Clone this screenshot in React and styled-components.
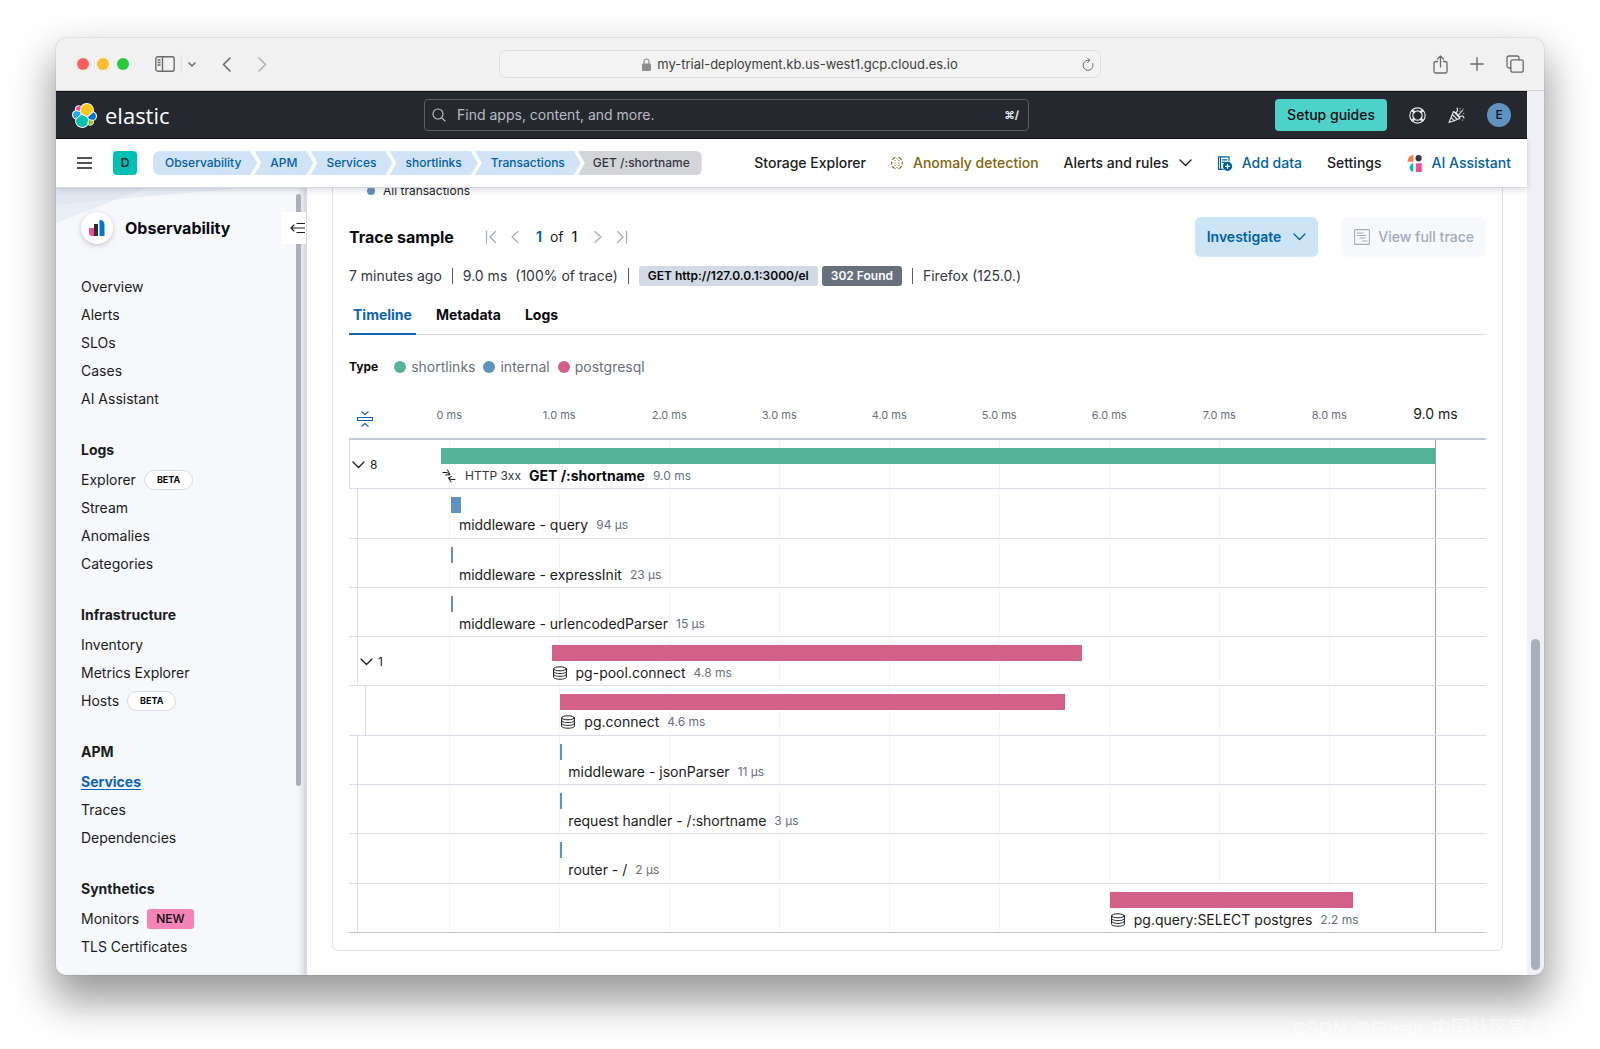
import React, { useState } from 'react';
import styled, { createGlobalStyle, css } from 'styled-components';

const color = {
  ink: '#1a1c21',
  title: '#0b0c10',
  subdued: '#69707d',
  disabled: '#a2abba',
  link: '#0061a6',
  active: '#0b64b8',
  border: '#d8deea',
  green: '#54b399',
  blue: '#6092c0',
  pink: '#d36086',
};

const GlobalStyle = createGlobalStyle`
  *, *::before, *::after { box-sizing: border-box; }
  body {
    margin: 0;
    background: #fff;
    color: ${color.ink};
    font-family: Inter, "Noto Sans", sans-serif;
    font-size: 14px;
    line-height: 20px;
  }
  button, input { font: inherit; color: inherit; }
  button { border: 0; padding: 0; background: none; cursor: pointer; }
  a { color: inherit; text-decoration: none; }
  h1, h2, h3, ul, ol { margin: 0; padding: 0; font: inherit; list-style: none; }
  svg { display: block; flex: none; }
`;

const Desktop = styled.div`
  position: relative;
  height: 100vh;
  min-height: 700px;
  padding: 38px 56px 74px;
  overflow: hidden;
`;

const BrowserWindow = styled.div`
  height: 100%;
  display: flex;
  flex-direction: column;
  border-radius: 10px;
  overflow: hidden;
  background: #fff;
  box-shadow: 0 0 1px rgba(0, 0, 0, 0.5), 0 22px 40px 4px rgba(0, 0, 0, 0.4);
`;

const Watermark = styled.div`
  position: absolute;
  right: 16px;
  bottom: 8px;
  font: 19px/24px "Liberation Sans", "Noto Sans CJK SC", sans-serif;
  color: rgba(255, 255, 255, 0.6);
`;

/* ---------- browser toolbar ---------- */

const TitleBar = styled.div`
  flex: none;
  height: 53px;
  display: grid;
  grid-template-columns: 1fr 602px 1fr;
  align-items: center;
  background: #f1f1f1;
  border-bottom: 1px solid #cfcfcf;
  color: #6b6b6b;
`;

const TitleGroup = styled.div`
  display: flex;
  align-items: center;
  justify-content: ${(p) => (p.$end ? 'flex-end' : 'flex-start')};
  gap: ${(p) => p.$gap}px;
  padding: ${(p) => p.$pad || 0};
`;

const Light = styled.span`
  width: 12px;
  height: 12px;
  border-radius: 50%;
  background: ${(p) => p.$color};
`;

const Divider = styled.span`
  width: 1px;
  height: 18px;
  background: #e2e2e2;
`;

const AddressBar = styled.div`
  display: grid;
  grid-template-columns: 1fr auto 1fr;
  align-items: center;
  height: 28px;
  padding: 0 6px;
  border: 1px solid #dcdcdc;
  border-radius: 7px;
  background: #f3f3f3;
`;

const Address = styled.label`
  grid-column: 2;
  display: flex;
  align-items: center;
  gap: 6px;
  input {
    field-sizing: content;
    border: 0;
    padding: 0;
    background: none;
    outline: none;
    font-size: 13px;
    color: #3f3f3f;
  }
`;

const Reload = styled.button`
  justify-self: end;
`;

/* ---------- page frame ---------- */

const Viewport = styled.div`
  flex: 1;
  min-height: 0;
  display: flex;
`;

const Page = styled.div`
  flex: 1;
  min-width: 0;
  display: flex;
  flex-direction: column;
`;

const ScrollTrack = styled.div`
  flex: none;
  width: 17px;
  display: flex;
  align-items: flex-end;
  justify-content: center;
  padding-bottom: 5px;
  background: #eff0f5;
`;

const PageThumb = styled.div`
  width: 9px;
  height: 37%;
  min-height: 331px;
  border-radius: 5px;
  background: #a9afba;
`;

const TopHeader = styled.header`
  flex: none;
  height: 48px;
  display: flex;
  align-items: center;
  padding: 0 16px;
  background: #25282f;
  border: solid #101114;
  border-width: 1px 0;
`;

const Brand = styled.a`
  display: flex;
  align-items: center;
  gap: 8px;
  width: 106px;
  color: #fff;
  font: 22px/30px "Open Sans", "Noto Sans", sans-serif;
`;

const SearchArea = styled.div`
  flex: 1;
  display: flex;
  justify-content: center;
`;

const SearchBox = styled.label`
  display: flex;
  align-items: center;
  gap: 11px;
  width: 605px;
  height: 32px;
  padding: 0 9px 0 7px;
  border: 1px solid #5b5e65;
  border-radius: 4px;
  color: #c4c6cb;
  input {
    flex: 1;
    min-width: 0;
    border: 0;
    padding: 0;
    background: none;
    outline: none;
  }
  input::placeholder { color: #b9bbc0; opacity: 1; }
  kbd {
    font: 700 11px/16px Inter, "DejaVu Sans", sans-serif;
    color: #e8e9eb;
  }
`;

const HeaderActions = styled.div`
  display: flex;
  align-items: center;
  gap: 22px;
  color: #e6e7ea;
`;

const SetupButton = styled.button`
  height: 32px;
  padding: 0 12px;
  border-radius: 4px;
  background: #4dd2ca;
  color: #0b0c10;
  font-weight: 500;
`;

const Avatar = styled.button`
  width: 24px;
  height: 24px;
  border-radius: ${(p) => (p.$round ? '50%' : '4px')};
  background: ${(p) => p.$color};
  color: #07101f;
  font-size: 12px;
  line-height: 24px;
  font-weight: 500;
`;

const SubHeader = styled.div`
  position: relative;
  z-index: 1;
  flex: none;
  height: 49px;
  display: flex;
  align-items: center;
  gap: 16px;
  padding: 0 16px 0 20px;
  background: #fff;
  border-bottom: 1px solid #d3dae6;
  box-shadow: 0 2px 6px rgba(60, 60, 70, 0.18);
`;

const MenuButton = styled.button`
  margin-right: 4px;
`;

const Breadcrumbs = styled.ol`
  display: flex;
  li + li { margin-left: -3px; }
`;

const chevronTail = 'calc(100% - 7px) 0, 100% 50%, calc(100% - 7px) 100%';

const Crumb = styled.a`
  display: block;
  height: 24px;
  padding: 0 16px;
  font-size: 12px;
  line-height: 24px;
  font-weight: 500;
  white-space: nowrap;
  background: #d1e3f6;
  color: ${color.link};
  clip-path: polygon(0 0, ${chevronTail}, 0 100%, 7px 50%);
  ${(p) => p.$first && css`
    padding-left: 12px;
    border-radius: 7px 0 0 7px;
    clip-path: polygon(0 0, ${chevronTail}, 0 100%);
  `}
  ${(p) => p.$last && css`
    padding: 0 12px 0 15px;
    border-radius: 0 6px 6px 0;
    background: #d4d5d8;
    color: #343741;
    clip-path: polygon(0 0, 100% 0, 100% 100%, 0 100%, 7px 50%);
  `}
`;

const ToolLinks = styled.nav`
  margin-left: auto;
  display: flex;
  align-items: center;
  gap: 25px;
  white-space: nowrap;
`;

const ToolLink = styled.a`
  display: flex;
  align-items: center;
  gap: 10px;
  font-weight: 500;
  color: ${(p) => p.$color || color.ink};
`;

/* ---------- sidebar ---------- */

const Body = styled.div`
  flex: 1;
  min-height: 0;
  display: flex;
`;

const Sidebar = styled.aside`
  position: relative;
  flex: none;
  width: 251px;
  overflow: hidden;
  padding: 24px 0 0 25px;
  background: #f7f8fc;
  border-right: 1px solid #d3dae6;
  box-shadow: inset -6px 0 6px -3px rgba(110, 115, 130, 0.3);
`;

const SidebarArt = styled.svg`
  position: absolute;
  top: 0;
  left: 0;
`;

const SidebarThumb = styled.div`
  position: absolute;
  top: 6px;
  right: 5px;
  width: 5px;
  height: 592px;
  border-radius: 3px;
  background: #abb0ba;
`;

const SidebarTop = styled.div`
  position: relative;
  display: flex;
  align-items: center;
  gap: 12px;
  margin-bottom: 29px;
`;

const SolutionMark = styled.span`
  width: 32px;
  height: 32px;
  display: grid;
  place-items: center;
  border-radius: 50%;
  background: #fff;
  box-shadow: 0 1px 4px rgba(0, 0, 0, 0.16), 0 4px 8px rgba(0, 0, 0, 0.06);
`;

const SolutionTitle = styled.h2`
  font-size: 16px;
  line-height: 24px;
  font-weight: 700;
  color: ${color.title};
`;

const CollapseButton = styled.button`
  margin-left: auto;
  width: 25px;
  height: 32px;
  padding-left: 9px;
  border-radius: 4px 0 0 4px;
  background: #fff;
`;

const NavGroup = styled.section`
  & + & { margin-top: 23px; }
  h3 {
    height: 28px;
    margin-bottom: 2px;
    line-height: 28px;
    font-weight: 700;
  }
  li {
    display: flex;
    align-items: center;
    gap: 8px;
    height: 28px;
  }
`;

const NavLink = styled.a`
  ${(p) => p.$active && css`
    font-weight: 700;
    color: ${color.active};
    text-decoration: underline;
    text-underline-offset: 2px;
  `}
`;

const BetaBadge = styled.span`
  height: 20px;
  padding: 0 12px;
  border: 1px solid #d3dae6;
  border-radius: 10px;
  background: #fff;
  color: #07080a;
  font-size: 9px;
  line-height: 18px;
  font-weight: 700;
`;

const NewBadge = styled.span`
  height: 20px;
  padding: 0 9px;
  border-radius: 3px;
  background: #f583b7;
  color: #07080a;
  font-size: 12px;
  line-height: 20px;
  font-weight: 500;
`;

/* ---------- main panel ---------- */

const Main = styled.main`
  flex: 1;
  min-width: 0;
  display: flex;
  flex-direction: column;
  justify-content: flex-end;
  overflow: hidden;
  padding: 0 24px 24px 25px;
`;

const Panel = styled.section`
  padding: 30px 16px 17px;
  border: 1px solid ${color.border};
  border-radius: 6px;
`;

const SeriesKey = styled.div`
  display: flex;
  align-items: center;
  gap: 8px;
  margin-bottom: 18px;
  padding-left: 18px;
  font-size: 12px;
  line-height: 16px;
`;

const Dot = styled.span`
  flex: none;
  width: ${(p) => p.$size}px;
  height: ${(p) => p.$size}px;
  border-radius: 50%;
  background: ${(p) => p.$color};
`;

const TraceHeader = styled.div`
  display: flex;
  align-items: center;
  height: 40px;
  margin-bottom: 9px;
  h2 {
    margin-right: 29px;
    font-size: 16px;
    line-height: 24px;
    font-weight: 700;
    color: ${color.title};
  }
`;

const Pager = styled.div`
  display: flex;
  align-items: center;
  gap: 8px;
  color: ${color.disabled};
  button { width: 16px; height: 16px; }
`;

const PageCount = styled.div`
  display: flex;
  gap: 8px;
  margin: 0 5px;
  color: ${color.ink};
  b { font-weight: 500; }
  b:first-child { font-weight: 700; color: ${color.active}; }
`;

const TraceActions = styled.div`
  margin-left: auto;
  display: flex;
  gap: 24px;
`;

const ActionButton = styled.button`
  display: flex;
  align-items: center;
  gap: ${(p) => (p.$muted ? 8 : 12)}px;
  height: 40px;
  padding: 0 12px;
  border-radius: 6px;
  font-weight: ${(p) => (p.$muted ? 500 : 600)};
  background: ${(p) => (p.$muted ? '#f8f9fc' : '#cce4f5')};
  color: ${(p) => (p.$muted ? color.disabled : color.link)};
`;

const Summary = styled.div`
  display: flex;
  align-items: center;
  gap: 10px;
  height: 20px;
  margin-bottom: 9px;
  white-space: nowrap;
`;

const SummaryText = styled.span`
  display: flex;
  gap: 8px;
  color: #343741;
`;

const Pipe = styled.span`
  width: 1px;
  height: 16px;
  background: #5a5e68;
`;

const Badges = styled.span`
  display: flex;
  gap: 4px;
`;

const Badge = styled.span`
  height: 20px;
  padding: 0 9px;
  border-radius: 3px;
  background: ${(p) => p.$bg};
  color: ${(p) => p.$fg};
  font-size: 12px;
  line-height: 20px;
  font-weight: 600;
`;

const Tabs = styled.div`
  display: flex;
  gap: 16px;
  height: 40px;
  margin-bottom: 22px;
  box-shadow: inset 0 -1px 0 #d3dae6;
`;

const Tab = styled.button`
  padding: 0 4px;
  font-weight: 700;
  color: ${(p) => (p.$active ? color.active : color.title)};
  box-shadow: ${(p) => (p.$active ? `inset 0 -2px 0 ${color.active}` : 'none')};
`;

const Legend = styled.div`
  display: flex;
  align-items: center;
  gap: 8px;
  color: ${color.subdued};
  b {
    margin-right: 8px;
    font-size: 12px;
    font-weight: 700;
    color: ${color.title};
  }
`;

const LegendItem = styled.span`
  display: flex;
  align-items: center;
  gap: 5px;
`;

/* ---------- waterfall ---------- */

const Axis = styled.div`
  display: grid;
  grid-template-columns: 92px 1fr;
  height: 40px;
  margin-top: 21px;
`;

const FoldButton = styled.button`
  align-self: end;
  margin: 0 0 11px 8px;
  width: 16px;
  height: 16px;
`;

const Scale = styled.div`
  position: relative;
`;

const Tick = styled.span`
  position: absolute;
  top: ${(p) => (p.$total ? 8 : 7)}px;
  transform: translateX(-50%);
  white-space: nowrap;
  font-size: ${(p) => (p.$total ? 14 : 11)}px;
  line-height: ${(p) => (p.$total ? 16 : 20)}px;
  color: ${(p) => (p.$total ? color.ink : color.subdued)};
`;

const Waterfall = styled.div`
  position: relative;
  border-top: 2px solid #c2c8d6;
`;

const Grid = styled.div`
  position: absolute;
  inset: 0 0 0 92px;
  pointer-events: none;
`;

const GridLine = styled.span`
  position: absolute;
  top: 0;
  bottom: 0;
  width: 1px;
  background: ${(p) => (p.$total ? '#98a2b3' : '#f4f5f7')};
`;

const Rows = styled.ul`
  position: relative;
  display: grid;
  grid-auto-rows: 1fr;
  height: 493px;
`;

const Row = styled.li`
  display: grid;
  grid-template-columns: 92px minmax(0, 1fr);
  border-bottom: 1px solid ${color.border};
  &:last-child { border-bottom-color: #bfc5d1; }
`;

const Gutter = styled.div`
  margin-left: ${(p) => p.$depth * 8}px;
  border-left: 1px solid ${color.border};
  display: flex;
  align-items: center;
`;

const Toggle = styled.button`
  display: flex;
  align-items: center;
  gap: 5px;
  padding: 1px 0 0 2px;
  font-size: 12px;
`;

const Track = styled.div`
  padding-top: 8px;
`;

const Bar = styled.div`
  height: 16px;
  min-width: 2px;
  background: ${(p) => p.$color};
`;

const SpanLabel = styled.div`
  display: flex;
  align-items: center;
  gap: 8px;
  height: 24px;
  padding-left: ${(p) => (p.$plain ? 8 : 0)}px;
  white-space: nowrap;
  small { font-size: 12px; color: ${color.subdued}; }
  em { font-style: normal; font-size: 12px; color: #343741; }
  b { font-weight: 700; color: ${color.title}; }
`;

/* ---------- icons ---------- */

const Icon = ({ size = 16, children, w, h, stroke = 1 }) => (
  <svg width={w || size} height={h || size} viewBox={`0 0 ${w || size} ${h || size}`} fill="none"
    stroke="currentColor" strokeWidth={stroke} strokeLinecap="round" strokeLinejoin="round" aria-hidden="true">
    {children}
  </svg>
);

const ChevronDown = () => (
  <Icon w={13} h={8} stroke={1.3}><path d="M1 1l5.5 5.5L12 1" /></Icon>
);

const ElasticLogo = () => (
  <svg width="25" height="25" viewBox="0 0 32 32" aria-hidden="true">
    <path fill="#fff" d="M32 16.77c0-2.65-1.66-5-4.13-5.91.11-.57.17-1.14.17-1.73C28.03 4.1 23.93 0 18.9 0c-2.93 0-5.65 1.39-7.38 3.76A4.84 4.84 0 0 0 8.56 2.75 4.86 4.86 0 0 0 4 9.28 6.33 6.33 0 0 0 0 15.19c0 2.66 1.67 5.03 4.16 5.93-.11.55-.17 1.13-.17 1.73 0 5.01 4.09 9.1 9.11 9.1 2.95 0 5.67-1.42 7.39-3.76a4.8 4.8 0 0 0 7.57-3.8c0-.56-.1-1.11-.28-1.63A6.35 6.35 0 0 0 32 16.77" />
    <path fill="#fec514" d="M12.58 13.79l7 3.2 7.07-6.2c.1-.51.15-1.03.15-1.56 0-4.3-3.5-7.8-7.8-7.8-2.57 0-4.98 1.27-6.43 3.39l-1.18 6.1 1.19 2.87z" />
    <path fill="#00bfb3" d="M5.33 21.22c-.1.51-.16 1.05-.16 1.59 0 4.31 3.51 7.81 7.83 7.81 2.6 0 5.02-1.28 6.47-3.43l1.16-6.08-1.55-2.97-7.03-3.21-6.72 6.29z" />
    <path fill="#f04e98" d="M5.29 9.06l4.8 1.14 1.05-5.47a3.8 3.8 0 0 0-6.08 3.03c0 .45.08.9.23 1.3z" />
    <path fill="#1ba9f5" d="M4.87 10.21a5.33 5.33 0 0 0-.22 9.99l6.74-6.11-1.24-2.65-5.28-1.23z" />
    <path fill="#93c90e" d="M20.87 27.19a3.79 3.79 0 0 0 6.08-3.02c0-.46-.08-.9-.23-1.31l-4.8-1.12-1.05 5.45z" />
    <path fill="#07c" d="M21.85 20.56l5.28 1.24a5.33 5.33 0 0 0 .21-9.98l-6.9 6.06 1.41 2.68z" />
  </svg>
);

const DatabaseIcon = () => (
  <Icon>
    <ellipse cx="8" cy="3.8" rx="6.4" ry="2" />
    <path d="M1.6 3.8v8.4c0 1.1 2.9 2 6.4 2s6.4-.9 6.4-2V3.8M1.6 6.600c0 1.100 2.900 2 6.400 2s6.400-.9 6.400-2M1.600 9.400c0 1.100 2.900 2 6.400 2s6.400-.9 6.400-2" />
  </Icon>
);

const MergeIcon = () => (
  <Icon size={16}>
    <path d="M2 4.500h4l2.500 2M6.500 1.800l2.500 5-4.500.2M14 11.500h-4l-2.500-1.500M10.500 8.500l-3 1.500 2.500 4" />
  </Icon>
);

/* ---------- data ---------- */

const crumbs = ['Observability', 'APM', 'Services', 'shortlinks', 'Transactions', 'GET /:shortname'];

const nav = [
  { items: [['Overview'], ['Alerts'], ['SLOs'], ['Cases'], ['AI Assistant']] },
  { title: 'Logs', items: [['Explorer', 'BETA'], ['Stream'], ['Anomalies'], ['Categories']] },
  { title: 'Infrastructure', items: [['Inventory'], ['Metrics Explorer'], ['Hosts', 'BETA']] },
  { title: 'APM', items: [['Services'], ['Traces'], ['Dependencies']] },
  { title: 'Synthetics', items: [['Monitors', 'NEW'], ['TLS Certificates']] },
];

const types = [['shortlinks', color.green], ['internal', color.blue], ['postgresql', color.pink]];

const spans = [
  { name: 'GET /:shortname', prefix: 'HTTP 3xx', time: '9.0 ms', start: 0, length: 9.04, color: color.green, depth: 0, count: 8 },
  { name: 'middleware - query', time: '94 µs', start: 0.09, length: 0.094, color: color.blue, depth: 1 },
  { name: 'middleware - expressInit', time: '23 µs', start: 0.09, length: 0.01, color: color.blue, depth: 1 },
  { name: 'middleware - urlencodedParser', time: '15 µs', start: 0.09, length: 0.01, color: color.blue, depth: 1 },
  { name: 'pg-pool.connect', time: '4.8 ms', start: 1.005, length: 4.82, color: color.pink, depth: 1, count: 1, db: true },
  { name: 'pg.connect', time: '4.6 ms', start: 1.085, length: 4.585, color: color.pink, depth: 2, db: true },
  { name: 'middleware - jsonParser', time: '11 µs', start: 1.085, length: 0.01, color: color.blue, depth: 1 },
  { name: 'request handler - /:shortname', time: '3 µs', start: 1.085, length: 0.01, color: color.blue, depth: 1 },
  { name: 'router - /', time: '2 µs', start: 1.085, length: 0.01, color: color.blue, depth: 1 },
  { name: 'pg.query:SELECT postgres', time: '2.2 ms', start: 6.08, length: 2.21, color: color.pink, depth: 1, db: true },
];

const VISIBLE_MS = 9.5;
const AXIS_START = 0.075;
const TOTAL_MS = 9.04;
const pct = (ms) => `${(ms / VISIBLE_MS) * 100}%`;
const ticks = Array.from({ length: 9 }, (_, i) => i);

/* ---------- sections ---------- */

function BrowserBar() {
  return (
    <TitleBar>
      <TitleGroup $gap={8} $pad="0 0 0 21px">
        <Light $color="#ff5f57" />
        <Light $color="#febc2e" />
        <Light $color="#28c840" />
        <TitleGroup $gap={6} $pad="0 0 0 18px">
          <Icon w={20} h={16} stroke={1.4}>
            <rect x="0.8" y="0.8" width="18.4" height="14.4" rx="2" />
            <path d="M7.5 1v14M3 4h2M3 6.5h2M3 9h2" />
          </Icon>
          <Divider />
          <Icon w={8} h={5} stroke={1.5}><path d="M1 1l3 3 3-3" /></Icon>
        </TitleGroup>
        <TitleGroup $gap={27} $pad="0 0 0 18px">
          <Icon w={9} h={15} stroke={1.6}><path d="M8 1L1.5 7.5 8 14" /></Icon>
          <svg width="9" height="15" viewBox="0 0 9 15" fill="none" stroke="#b0b0b0" strokeWidth="1.6" strokeLinecap="round" strokeLinejoin="round"><path d="M1 1l6.5 6.5L1 14" /></svg>
        </TitleGroup>
      </TitleGroup>
      <AddressBar>
        <Address>
          <svg width="9" height="13" viewBox="0 0 9 13" aria-hidden="true">
            <path d="M2 6V3.500a2.500 2.500 0 0 1 5 0V6" fill="none" stroke="#8e8e8e" strokeWidth="1.2" />
            <rect y="5.5" width="9" height="7.5" rx="1.2" fill="#8e8e8e" />
          </svg>
          <input aria-label="Address" defaultValue="my-trial-deployment.kb.us-west1.gcp.cloud.es.io" />
        </Address>
        <Reload aria-label="Reload">
          <Icon w={12} h={14}><path d="M10.800 6.500A5 5 0 1 1 6 3.300h1.500M5.500 1l2.300 2.300-2.300 2.300" /></Icon>
        </Reload>
      </AddressBar>
      <TitleGroup $end $gap={22} $pad="0 20px 0 0">
        <Icon w={15} h={19} stroke={1.3}>
          <path d="M4.500 6.500H2.500a1.500 1.500 0 0 0-1.500 1.500v8.500A1.500 1.500 0 0 0 2.500 18h10a1.500 1.500 0 0 0 1.500-1.500V8a1.500 1.500 0 0 0-1.500-1.500h-2M7.500 12V1M4.500 4l3-3 3 3" />
        </Icon>
        <Icon w={14} h={14} stroke={1.4}><path d="M7 .8v12.400M.8 7h12.400" /></Icon>
        <Icon w={18} h={18} stroke={1.3}>
          <rect x="4.8" y="4.8" width="12.4" height="12.4" rx="2" />
          <path d="M4.800 13H3a2 2 0 0 1-2-2V3a2 2 0 0 1 2-2h8a2 2 0 0 1 2 2v1.800" />
        </Icon>
      </TitleGroup>
    </TitleBar>
  );
}

function AppHeader() {
  return (
    <>
      <TopHeader>
        <Brand href="#home"><ElasticLogo />elastic</Brand>
        <SearchArea>
          <SearchBox>
            <Icon w={14} h={14} stroke={1.1}><circle cx="6" cy="6" r="5" /><path d="M9.600 9.600L13 13" /></Icon>
            <input type="search" placeholder="Find apps, content, and more." aria-label="Search" />
            <kbd>⌘/</kbd>
          </SearchBox>
        </SearchArea>
        <HeaderActions>
          <SetupButton>Setup guides</SetupButton>
          <Icon w={17} h={17} stroke={1.2}>
            <circle cx="8.5" cy="8.5" r="7.7" />
            <circle cx="8.5" cy="8.5" r="4.7" />
            <path d="M3.600 2.600l2.200 2.400M2.600 3.600L5 5.800M13.400 2.600l-2.200 2.400M14.400 3.600L12 5.800M3.600 14.400l2.200-2.400M2.600 13.400L5 11.200M13.400 14.400l-2.200-2.400M14.400 13.400L12 11.200" />
          </Icon>
          <Icon w={17} h={17} stroke={1.1}>
            <path d="M5.500 4.500L1 15.500l11-4zM4.300 7.500l5.200 5M3 10.500l3.500 3.300M5.500 4.500c2.500 1 5.500 4 6.500 7M8 5.500c1.500-1 2-2.500 1-4.500M10.500 8l4-4.500M12 9.500c1.500-1 3.500-.5 4 1.500M12 1.500v.1M15 2v.1M15.800 6.500v.1M12 4v.1M14.500 13v.1" />
          </Icon>
          <Avatar $round $color="#6092c0" aria-label="Account">E</Avatar>
        </HeaderActions>
      </TopHeader>
      <SubHeader>
        <MenuButton aria-label="Menu">
          <Icon w={17} h={14} stroke={1.7}><path d="M1 2h15M1 7h15M1 12h15" strokeLinecap="butt" /></Icon>
        </MenuButton>
        <Avatar $color="#00bfb3" aria-label="Default space">D</Avatar>
        <Breadcrumbs>
          {crumbs.map((c, i) => (
            <li key={c}><Crumb href={`#${i}`} $first={i === 0} $last={i === crumbs.length - 1}>{c}</Crumb></li>
          ))}
        </Breadcrumbs>
        <ToolLinks>
          <ToolLink href="#storage">Storage Explorer</ToolLink>
          <ToolLink href="#anomaly" $color="#83650a">
            <Icon w={12} h={14} stroke={1.2}>
              <path d="M4 1.500a5.500 5.500 0 0 0-2.400 2M.7 6v2M1.600 10.500a5.500 5.500 0 0 0 2.400 2M8 1.500a5.500 5.500 0 0 1 2.400 2M11.300 6v2M10.400 10.500a5.500 5.500 0 0 1-2.400 2M4 4.500v.1M8 4.500v.1M4 7v.1M8 7v.1M4 9.500v.1M8 9.500v.1M6 2.500v.1M6 11.500v.1" />
            </Icon>
            Anomaly detection
          </ToolLink>
          <ToolLink as="button">Alerts and rules<ChevronDown /></ToolLink>
          <ToolLink href="#add" $color={color.link}>
            <Icon w={15} h={15} stroke={1.2}>
              <path d="M6 13.400H1.500V.8h10.500v4M3.500.8v12.600M5.500 3.800h4.500M5.500 6.300h2.500" />
              <circle cx="10.5" cy="10.3" r="4" fill="currentColor" />
              <path d="M10.500 8.300v4M8.500 10.300h4" stroke="#fff" />
            </Icon>
            Add data
          </ToolLink>
          <ToolLink href="#settings">Settings</ToolLink>
          <ToolLink href="#assistant" $color={color.link}>
            <svg width="15" height="17" viewBox="0 0 15 17" aria-hidden="true">
              <path d="M6.300 0v6.800H.5C.5 3 3 .3 6.300 0z" fill="#ff7e42" />
              <circle cx="11.6" cy="3.2" r="3.1" fill="#343741" />
              <path d="M6.300 8.200V17A4.500 4.500 0 0 1 6.300 8.200z" fill="#00bfb3" />
              <path d="M8.800 8.200h6V17h-6z" fill="#f04e98" />
            </svg>
            AI Assistant
          </ToolLink>
        </ToolLinks>
      </SubHeader>
    </>
  );
}

function SideNav() {
  return (
    <Sidebar>
      <SidebarArt width="200" height="40" viewBox="0 0 200 40" aria-hidden="true">
        <path d="M0 0h186L0 17z" fill="#e9edf5" />
        <path d="M0 0h90L0 35z" fill="#d9e3ef" fillOpacity="0.5" />
      </SidebarArt>
      <SidebarThumb />
      <SidebarTop>
        <SolutionMark>
          <svg width="16" height="16" viewBox="0 0 16 16" aria-hidden="true">
            <path d="M0 8h5v8H3a3 3 0 0 1-3-3z" fill="#f04e98" />
            <path d="M5 4h4v12H5z" fill="#2b2d3b" />
            <path d="M10.500 0c3 0 5 2 5 4.500V16h-5z" fill="#07c" />
          </svg>
        </SolutionMark>
        <SolutionTitle>Observability</SolutionTitle>
        <CollapseButton aria-label="Collapse navigation">
          <Icon w={15} h={12} stroke={1.1}><path d="M4 3L1 6l3 3M1 6h14M7 1.500h8M7 10.500h8" /></Icon>
        </CollapseButton>
      </SidebarTop>
      {nav.map((group, g) => (
        <NavGroup key={g}>
          {group.title && <h3>{group.title}</h3>}
          <ul>
            {group.items.map(([label, tag]) => (
              <li key={label}>
                <NavLink href={`#${label}`} $active={label === 'Services'}>{label}</NavLink>
                {tag === 'BETA' && <BetaBadge>BETA</BetaBadge>}
                {tag === 'NEW' && <NewBadge>NEW</NewBadge>}
              </li>
            ))}
          </ul>
        </NavGroup>
      ))}
    </Sidebar>
  );
}

function TraceWaterfall() {
  return (
    <>
      <Axis>
        <FoldButton aria-label="Fold all">
          <svg width="16" height="16" viewBox="0 0 16 16" fill="none" stroke={color.active} strokeWidth="1.1">
            <path d="M.6 6.500h14.800v3H.6zM4.500.5L8 3.500 11.500.5M4.500 15.500L8 12.500l3.500 3" />
          </svg>
        </FoldButton>
        <Scale>
          {ticks.map((t) => (
            <Tick key={t} style={{ left: pct(t + AXIS_START) }}>{t === 0 ? '0 ms' : `${t}.0 ms`}</Tick>
          ))}
          <Tick $total style={{ left: pct(TOTAL_MS) }}>9.0 ms</Tick>
        </Scale>
      </Axis>
      <Waterfall>
        <Grid>
          {ticks.map((t) => <GridLine key={t} style={{ left: pct(t + AXIS_START) }} />)}
          <GridLine $total style={{ left: pct(TOTAL_MS) }} />
        </Grid>
        <Rows>
          {spans.map((s) => (
            <Row key={s.name}>
              <Gutter $depth={s.depth}>
                {s.count && <Toggle aria-expanded="true"><ChevronDown />{s.count}</Toggle>}
              </Gutter>
              <Track style={{ marginLeft: pct(s.start) }}>
                <Bar $color={s.color} style={{ width: `${(s.length / (VISIBLE_MS - s.start)) * 100}%` }} />
                <SpanLabel $plain={!s.db && !s.prefix}>
                  {s.db && <DatabaseIcon />}
                  {s.prefix ? <><MergeIcon /><em>{s.prefix}</em><b>{s.name}</b></> : <span>{s.name}</span>}
                  <small>{s.time}</small>
                </SpanLabel>
              </Track>
            </Row>
          ))}
        </Rows>
      </Waterfall>
    </>
  );
}

function TracePanel() {
  const [tab, setTab] = useState('Timeline');
  return (
    <Main>
      <Panel>
        <SeriesKey><Dot $size={8} $color={color.blue} />All transactions</SeriesKey>
        <TraceHeader>
          <h2>Trace sample</h2>
          <Pager>
            <button aria-label="First"><Icon stroke={1.2}><path d="M3.500 2v12M12.500 2.500L7 8l5.500 5.500" /></Icon></button>
            <button aria-label="Previous"><Icon stroke={1.2}><path d="M11 2.500L5 8l6 5.500" /></Icon></button>
            <PageCount><b>1</b>of<b>1</b></PageCount>
            <button aria-label="Next"><Icon stroke={1.2}><path d="M5 2.500L11 8l-6 5.500" /></Icon></button>
            <button aria-label="Last"><Icon stroke={1.2}><path d="M12.500 2v12M3.500 2.500L9 8l-5.500 5.500" /></Icon></button>
          </Pager>
          <TraceActions>
            <ActionButton>Investigate<ChevronDown /></ActionButton>
            <ActionButton $muted disabled>
              <Icon stroke={1.1}>
                <rect x="0.6" y="0.6" width="14.8" height="14.8" rx="1" />
                <path d="M3.500 4h6M3.500 6.500h8M6 9h5M8.500 12h4.500" />
              </Icon>
              View full trace
            </ActionButton>
          </TraceActions>
        </TraceHeader>
        <Summary>
          <SummaryText>7 minutes ago</SummaryText>
          <Pipe />
          <SummaryText><span>9.0 ms</span><span>(100% of trace)</span></SummaryText>
          <Pipe />
          <Badges>
            <Badge $bg="#d3dae6" $fg="#07080a">GET http://127.0.0.1:3000/el</Badge>
            <Badge $bg="#69707d" $fg="#fff">302 Found</Badge>
          </Badges>
          <Pipe />
          <SummaryText>Firefox (125.0.)</SummaryText>
        </Summary>
        <Tabs role="tablist">
          {['Timeline', 'Metadata', 'Logs'].map((t) => (
            <Tab key={t} role="tab" aria-selected={tab === t} $active={tab === t} onClick={() => setTab(t)}>{t}</Tab>
          ))}
        </Tabs>
        <Legend>
          <b>Type</b>
          {types.map(([name, c]) => <LegendItem key={name}><Dot $size={12} $color={c} />{name}</LegendItem>)}
        </Legend>
        <TraceWaterfall />
      </Panel>
    </Main>
  );
}

export default function App() {
  return (
    <>
      <GlobalStyle />
      <Desktop>
        <BrowserWindow>
          <BrowserBar />
          <Viewport>
            <Page>
              <AppHeader />
              <Body>
                <SideNav />
                <TracePanel />
              </Body>
            </Page>
            <ScrollTrack><PageThumb /></ScrollTrack>
          </Viewport>
        </BrowserWindow>
        <Watermark>CSDN @Elastic 中国社区官方博客</Watermark>
      </Desktop>
    </>
  );
}
